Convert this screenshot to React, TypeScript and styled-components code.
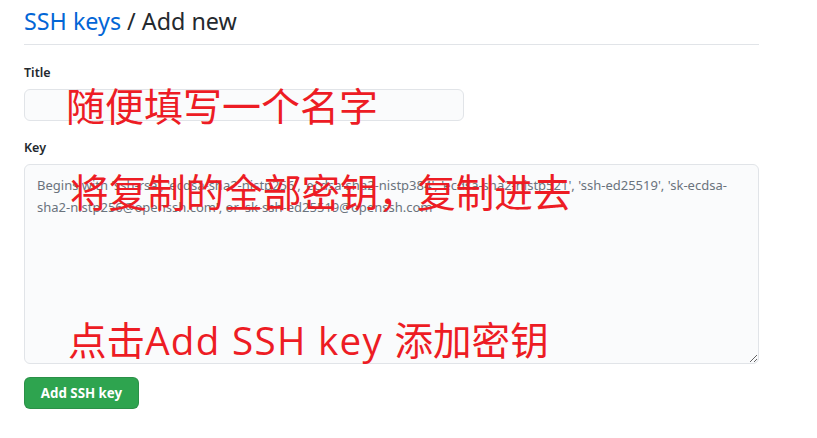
import React from "react";
import styled, { createGlobalStyle } from "styled-components";

const Global = createGlobalStyle`
  html, body { margin: 0; padding: 0; background: #ffffff; }
  body { font-family: "Noto Sans", "Liberation Sans", sans-serif; color: #24292e; }
  * { box-sizing: border-box; }
`;

const Page = styled.div`
  position: relative;
  width: 817px;
  height: 438px;
  padding: 0 58px 0 24px;
  overflow: hidden;
`;

const Header = styled.div`
  padding-top: 3px;
  padding-bottom: 5px;
  border-bottom: 1px solid #e1e4e8;
`;

const Heading = styled.h2`
  margin: 0;
  font-size: 23.3px;
  font-weight: 400;
  line-height: 36px;
  color: #24292e;
`;

const Crumb = styled.span`
  color: #0366d6;
`;

const Form = styled.div`
  display: flex;
  flex-direction: column;
  padding-top: 19px;
`;

const Field = styled.div<{ $gap: number }>`
  display: flex;
  flex-direction: column;
  margin-bottom: ${(p) => p.$gap}px;
`;

const Label = styled.label`
  font-size: 12.5px;
  font-weight: 600;
  line-height: 18px;
  margin-bottom: 7px;
  color: #24292e;
`;

const TextInput = styled.input`
  width: 440px;
  height: 32px;
  padding: 5px 12px;
  font-family: "Noto Sans", sans-serif;
  font-size: 14px;
  background: #fafbfc;
  border: 1px solid #e1e4e8;
  border-radius: 6px;
  outline: none;
`;

const TextArea = styled.textarea`
  width: 735px;
  height: 200px;
  padding: 9px 12px;
  font-family: "Noto Sans", sans-serif;
  font-size: 13px;
  line-height: 22px;
  background: #fafbfc;
  border: 1px solid #e1e4e8;
  border-radius: 6px;
  outline: none;
  resize: both;
  &::placeholder { color: #6a737d; }
`;

const Button = styled.button`
  align-self: flex-start;
  width: 115px;
  height: 32px;
  font-family: "Noto Sans", sans-serif;
  font-size: 13.3px;
  font-weight: 700;
  color: #ffffff;
  background: #2ea44f;
  border: 1px solid rgba(27, 31, 35, 0.15);
  border-radius: 6px;
  padding: 0;
`;

const Note = styled.div<{ $x: number; $y: number; $size: number }>`
  position: absolute;
  left: ${(p) => p.$x}px;
  top: ${(p) => p.$y}px;
  font-family: "Open Sans", "Noto Sans CJK SC", sans-serif;
  font-size: ${(p) => p.$size}px;
  line-height: 1;
  color: #ed1c24;
  white-space: nowrap;
  pointer-events: none;
`;

const Latin = styled.span`
  letter-spacing: 1.3px;
`;

export default function App() {
  return (
    <>
      <Global />
      <Page>
        <Header>
          <Heading>
            <Crumb>SSH keys</Crumb> / Add new
          </Heading>
        </Header>
        <Form>
          <Field $gap={18}>
            <Label>Title</Label>
            <TextInput />
          </Field>
          <Field $gap={13}>
            <Label>Key</Label>
            <TextArea placeholder="Begins with 'ssh-rsa', 'ecdsa-sha2-nistp256', 'ecdsa-sha2-nistp384', 'ecdsa-sha2-nistp521', 'ssh-ed25519', 'sk-ecdsa-sha2-nistp256@openssh.com', or 'sk-ssh-ed25519@openssh.com'" />
          </Field>
          <Button>Add SSH key</Button>
        </Form>
        <Note $x={66} $y={86} $size={39}>随便填写一个名字</Note>
        <Note $x={70} $y={173} $size={38.6}>将复制的全部密钥，复制进去</Note>
        <Note $x={68} $y={321} $size={38.6}>
          点击<Latin>Add SSH key </Latin>添加密钥
        </Note>
      </Page>
    </>
  );
}
